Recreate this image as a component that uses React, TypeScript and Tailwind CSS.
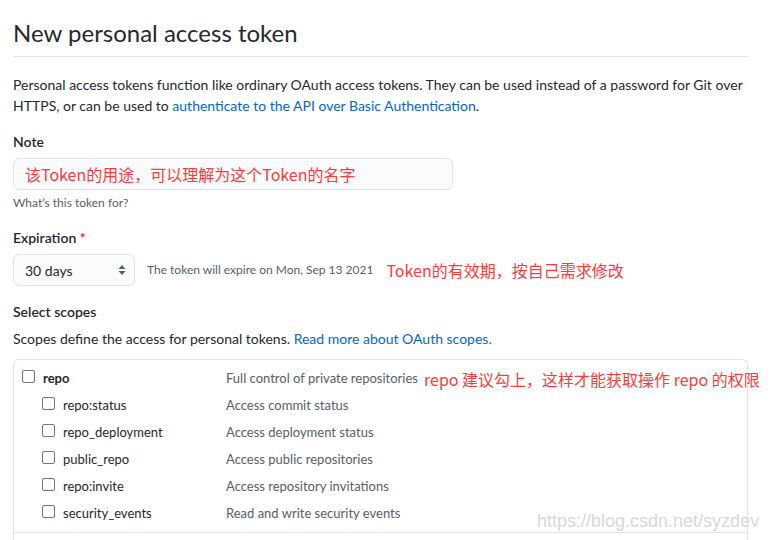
const subScopes = [
  { name: "repo:status", desc: "Access commit status" },
  { name: "repo_deployment", desc: "Access deployment status" },
  { name: "public_repo", desc: "Access public repositories" },
  { name: "repo:invite", desc: "Access repository invitations" },
  { name: "security_events", desc: "Read and write security events" },
];

const cn = { fontFamily: '"Noto Sans CJK SC", sans-serif' };

function Checkbox() {
  return <span className="inline-block h-[13px] w-[13px] shrink-0 rounded-[2px] border border-[#767676] bg-white" />;
}

export default function App() {
  return (
    <main
      className="relative h-[540px] overflow-hidden bg-white pl-[13px] pr-[28px] text-[#24292e]"
      style={{ fontFamily: 'Lato, "Noto Sans CJK SC", sans-serif' }}
    >
      <h1 className="border-b border-[#e1e4e8] pt-[18px] pb-[8px] text-[24px] leading-[30px] font-normal">
        New personal access token
      </h1>

      <p className="mt-[17px] text-[14px] leading-[21px]">
        Personal access tokens function like ordinary OAuth access tokens. They can be used instead of a password for Git over
        <br />
        HTTPS, or can be used to <a className="text-[#0366d6]">authenticate to the API over Basic Authentication</a>.
      </p>

      <div className="mt-[15px] text-[14px] leading-[21px] font-semibold">Note</div>
      <div
        className="mt-[6px] flex h-[32px] w-[440px] items-center rounded-[6px] border border-[#e1e4e8] bg-[#fafbfc] px-[11px] text-[16px] text-[#ff3b3b]"
        style={cn}
      >
        该Token的用途，可以理解为这个Token的名字
      </div>
      <div className="mt-[4px] text-[12px] leading-[18px] text-[#586069]">What’s this token for?</div>

      <div className="mt-[15px] text-[14px] leading-[21px] font-semibold">
        Expiration <span className="text-[#cb2431]">*</span>
      </div>
      <div className="mt-[6px] flex items-center">
        <div className="flex h-[32px] w-[122px] items-center justify-between rounded-[6px] border border-[#e1e4e8] bg-[#fafbfc] pr-[8px] pl-[11px] text-[14px]">
          <span>30 days</span>
          <svg width="8" height="12" viewBox="0 0 8 12" fill="#586069">
            <path d="M4 1 L7.5 5 H0.5 Z" />
            <path d="M4 11 L7.5 7 H0.5 Z" />
          </svg>
        </div>
        <span className="ml-[12px] text-[12px] text-[#586069]">The token will expire on Mon, Sep 13 2021</span>
        <span className="ml-[13px] text-[16px] text-[#ff3b3b]" style={cn}>
          Token的有效期，按自己需求修改
        </span>
      </div>

      <div className="mt-[15px] text-[14px] leading-[21px] font-semibold">Select scopes</div>
      <p className="mt-[6px] text-[14px] leading-[21px]">
        Scopes define the access for personal tokens. <a className="text-[#0366d6]">Read more about OAuth scopes.</a>
      </p>

      <div className="mt-[10px] rounded-t-[6px] border-x border-t border-[#e1e4e8]">
        <div className="border-b border-[#e1e4e8] pt-[10px] pb-[9px]">
          <div className="flex h-[18px] items-center text-[13px]">
            <span className="ml-[8px] shrink-0"><Checkbox /></span>
            <span className="ml-[8px] w-[183px] shrink-0 font-bold">repo</span>
            <span className="w-[198px] shrink-0 text-[#586069]">Full control of private repositories</span>
            <span className="shrink-0 whitespace-nowrap text-[16px] text-[#ff3b3b]" style={cn}>
              repo 建议勾上，这样才能获取操作 repo 的权限
            </span>
          </div>
          {subScopes.map((s) => (
            <div key={s.name} className="mt-[9px] flex h-[18px] items-center text-[13px]">
              <span className="ml-[28px] shrink-0"><Checkbox /></span>
              <span className="ml-[8px] w-[163px] shrink-0">{s.name}</span>
              <span className="text-[#586069]">{s.desc}</span>
            </div>
          ))}
        </div>
        <div className="h-[20px]" />
      </div>

      <div
        className="absolute top-[509px] left-[537px] text-[18px] leading-[24px] text-[#d9d9d9]"
        style={{ fontFamily: '"Liberation Sans", sans-serif' }}
      >
        https://blog.csdn.net/syzdev
      </div>
    </main>
  );
}
